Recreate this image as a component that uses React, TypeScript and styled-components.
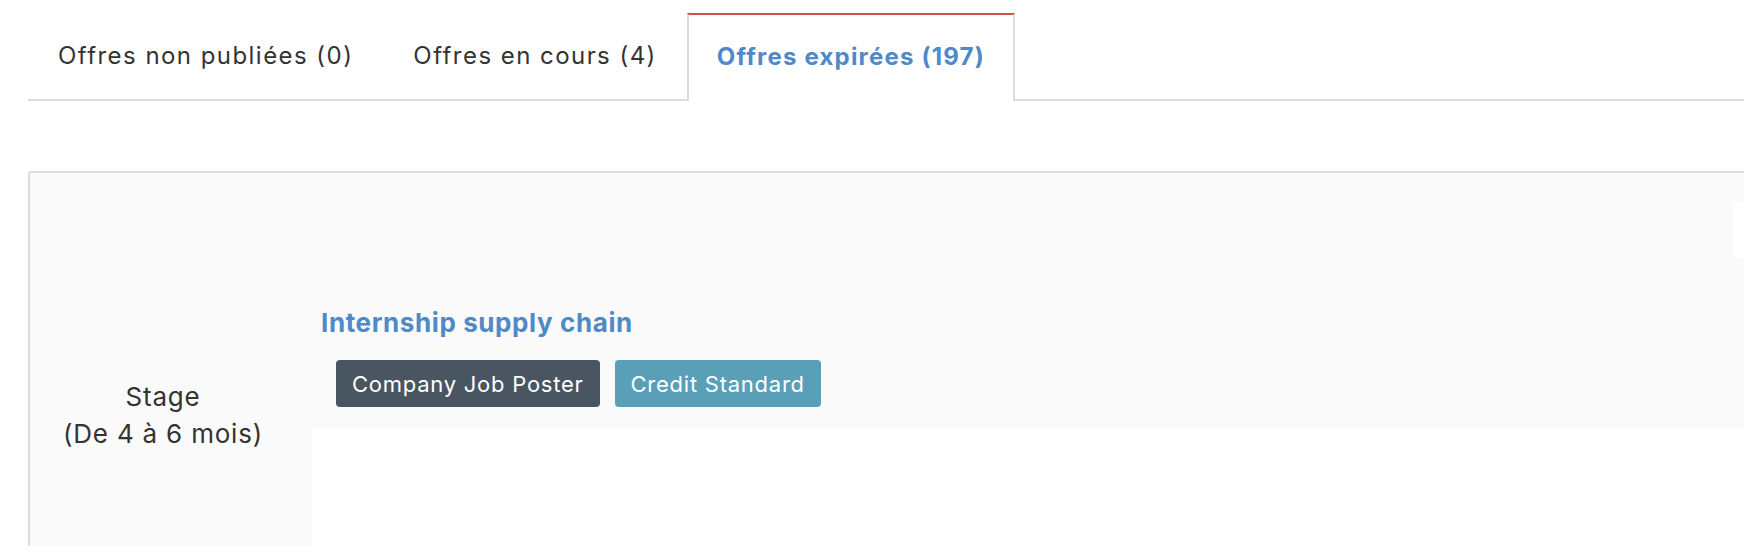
import React from "react";
import styled, { createGlobalStyle } from "styled-components";

const GlobalStyle = createGlobalStyle`
  html, body {
    margin: 0;
    padding: 0;
    background: #ffffff;
    overflow: hidden;
  }
  body {
    font-family: Inter, "Open Sans", sans-serif;
    color: #333333;
  }
`;

const Page = styled.div`
  width: 1800px;
  padding: 13px 0 0 28px;
  box-sizing: border-box;
`;

const TabBar = styled.div`
  display: flex;
  border-bottom: 2px solid #dcdcdc;
  height: 86px;
`;

const Tab = styled.div<{ $active?: boolean }>`
  display: flex;
  align-items: center;
  padding: 0 28px 4px;
  box-sizing: border-box;
  border-left: 2px solid ${(p) => (p.$active ? "#dcdcdc" : "transparent")};
  border-right: 2px solid ${(p) => (p.$active ? "#dcdcdc" : "transparent")};
  border-top: 2px solid ${(p) => (p.$active ? "#cf5148" : "transparent")};
  background: ${(p) => (p.$active ? "#ffffff" : "transparent")};
  margin-bottom: ${(p) => (p.$active ? "-2px" : "0")};
  height: ${(p) => (p.$active ? "88px" : "86px")};
  font-size: 24px;
  letter-spacing: ${(p) => (p.$active ? "1.2px" : "1.45px")};
  font-weight: ${(p) => (p.$active ? 700 : 400)};
  color: ${(p) => (p.$active ? "#5089c7" : "#333333")};
  white-space: nowrap;
`;

const Card = styled.div`
  margin-top: 70px;
  border: 2px solid #dcdcdc;
  border-radius: 3px;
  background: #fafafa;
  display: grid;
  grid-template-columns: 282px 1fr;
  min-height: 480px;
`;

const TypeCell = styled.div`
  display: flex;
  flex-direction: column;
  align-items: center;
  justify-content: center;
  padding: 4px 16px 0 0;
  font-size: 26px;
  letter-spacing: 0.8px;
  line-height: 37px;
  color: #333333;
  text-align: center;
`;

const MainCell = styled.div`
  display: flex;
  flex-direction: column;
`;

const Header = styled.div`
  display: grid;
  grid-template-columns: 1fr auto;
  padding: 29px 15px 21px 9px;
  height: 255px;
  box-sizing: border-box;
  background: #fafafa;
`;

const TitleBlock = styled.div`
  align-self: end;
  display: flex;
  flex-direction: column;
  gap: 21px;
`;

const Title = styled.div`
  font-size: 26px;
  font-weight: 700;
  letter-spacing: 0.6px;
  color: #5089c7;
  line-height: 32px;
`;

const Badges = styled.div`
  display: flex;
  gap: 15px;
  padding-left: 15px;
`;

const Badge = styled.span<{ $tone: "dark" | "info" }>`
  display: inline-flex;
  align-items: center;
  height: 47px;
  padding: 0 16px;
  border-radius: 4px;
  background: ${(p) => (p.$tone === "dark" ? "#4a5562" : "#5a9fb8")};
  color: #ffffff;
  font-size: 22px;
  letter-spacing: 0.75px;
  white-space: nowrap;
`;

const ActionBox = styled.div`
  align-self: start;
  width: 50px;
  height: 56px;
  background: #ffffff;
  border-radius: 5px;
`;

const Body = styled.div`
  flex: 1;
  background: #ffffff;
`;

export default function App() {
  return (
    <>
      <GlobalStyle />
      <Page>
        <TabBar>
          <Tab>Offres non publiées (0)</Tab>
          <Tab>Offres en cours (4)</Tab>
          <Tab $active>Offres expirées (197)</Tab>
        </TabBar>
        <Card>
          <TypeCell>
            <span>Stage</span>
            <span>(De 4 à 6 mois)</span>
          </TypeCell>
          <MainCell>
            <Header>
              <TitleBlock>
                <Title>Internship supply chain</Title>
                <Badges>
                  <Badge $tone="dark">Company Job Poster</Badge>
                  <Badge $tone="info">Credit Standard</Badge>
                </Badges>
              </TitleBlock>
              <ActionBox />
            </Header>
            <Body />
          </MainCell>
        </Card>
      </Page>
    </>
  );
}
